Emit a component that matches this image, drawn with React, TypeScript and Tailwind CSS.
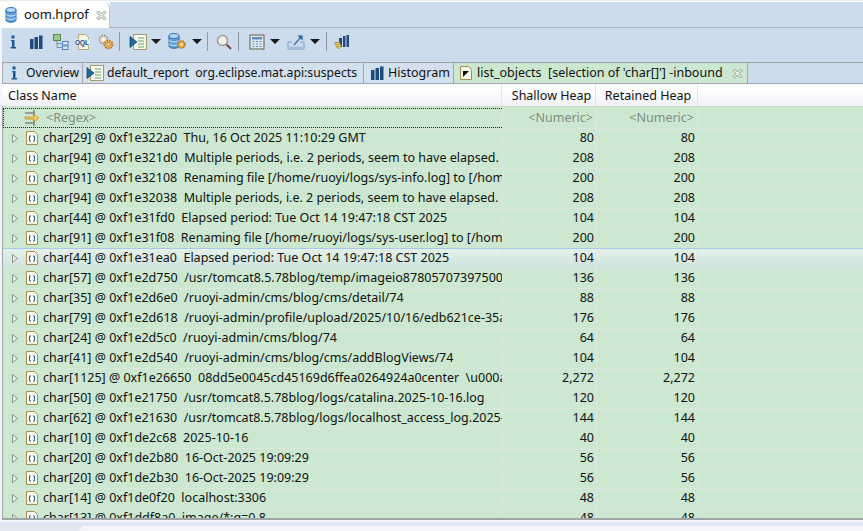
const rows: [string, string][] = [
  ["char[29] @ 0xf1e322a0  Thu, 16 Oct 2025 11:10:29 GMT", "80"],
  ["char[94] @ 0xf1e321d0  Multiple periods, i.e. 2 periods, seem to have elapsed.", "208"],
  ["char[91] @ 0xf1e32108  Renaming file [/home/ruoyi/logs/sys-info.log] to [/home", "200"],
  ["char[94] @ 0xf1e32038  Multiple periods, i.e. 2 periods, seem to have elapsed.", "208"],
  ["char[44] @ 0xf1e31fd0  Elapsed period: Tue Oct 14 19:47:18 CST 2025", "104"],
  ["char[91] @ 0xf1e31f08  Renaming file [/home/ruoyi/logs/sys-user.log] to [/home", "200"],
  ["char[44] @ 0xf1e31ea0  Elapsed period: Tue Oct 14 19:47:18 CST 2025", "104"],
  ["char[57] @ 0xf1e2d750  /usr/tomcat8.5.78blog/temp/imageio8780570739750035", "136"],
  ["char[35] @ 0xf1e2d6e0  /ruoyi-admin/cms/blog/cms/detail/74", "88"],
  ["char[79] @ 0xf1e2d618  /ruoyi-admin/profile/upload/2025/10/16/edb621ce-35a", "176"],
  ["char[24] @ 0xf1e2d5c0  /ruoyi-admin/cms/blog/74", "64"],
  ["char[41] @ 0xf1e2d540  /ruoyi-admin/cms/blog/cms/addBlogViews/74", "104"],
  ["char[1125] @ 0xf1e26650  08dd5e0045cd45169d6ffea0264924a0center  \\u000a", "2,272"],
  ["char[50] @ 0xf1e21750  /usr/tomcat8.5.78blog/logs/catalina.2025-10-16.log", "120"],
  ["char[62] @ 0xf1e21630  /usr/tomcat8.5.78blog/logs/localhost_access_log.2025-", "144"],
  ["char[10] @ 0xf1de2c68  2025-10-16", "40"],
  ["char[20] @ 0xf1de2b80  16-Oct-2025 19:09:29", "56"],
  ["char[20] @ 0xf1de2b30  16-Oct-2025 19:09:29", "56"],
  ["char[14] @ 0xf1de0f20  localhost:3306", "48"],
  ["char[13] @ 0xf1ddf8a0  image/*;q=0.8", "48"],
];

function InfoIcon() {
  return (
    <svg width="16" height="16" viewBox="0 0 16 16">
      <rect x="6.5" y="1.5" width="3" height="3" fill="#1c5a96" />
      <path d="M6 6h3.5v7H11v1.5H5.5V13H7V7.3H6z" fill="#1c5a96" />
    </svg>
  );
}

function HistogramIcon() {
  return (
    <svg width="16" height="16" viewBox="0 0 16 16">
      <rect x="2" y="5" width="3.5" height="10" fill="#1f4a7c" />
      <rect x="6.5" y="3" width="3.5" height="12" fill="#1f4a7c" />
      <rect x="11" y="1.5" width="3.5" height="13.5" fill="#1f4a7c" />
    </svg>
  );
}

function TreeIcon() {
  return (
    <svg width="16" height="16" viewBox="0 0 16 16" fill="none">
      <rect x="0.5" y="0.5" width="7" height="6" fill="#9bc98f" stroke="#4f8a4a" />
      <path d="M4 7v6.5h5M4 9.5h5" stroke="#7a8fa8" />
      <rect x="9.5" y="7.5" width="5.5" height="3.5" fill="#dbe8f5" stroke="#4f86c0" />
      <rect x="9.5" y="12" width="5.5" height="3.5" fill="#dbe8f5" stroke="#4f86c0" />
    </svg>
  );
}

function OqlIcon() {
  return (
    <svg width="16" height="16" viewBox="0 0 16 16" fill="none">
      <path d="M3.5 0.5h7l3 3v12h-10z" fill="#f7f4e4" stroke="#b8a878" />
      <rect x="0" y="5.5" width="15" height="6" fill="#eef0f8" />
      <text x="0" y="11" fontSize="6.5" fontWeight="700" fontFamily="Liberation Sans, sans-serif" fill="#1f3f78">OQL</text>
    </svg>
  );
}

function GearIcon() {
  return (
    <svg width="16" height="16" viewBox="0 0 16 16" fill="none">
      <circle cx="5.5" cy="5.5" r="4" fill="#eadfce" stroke="#a08a78" strokeWidth="1.6" strokeDasharray="1.6 1.1" />
      <circle cx="5.5" cy="5.5" r="1.2" fill="#fff" />
      <circle cx="10.5" cy="10.5" r="4" fill="#e8b860" stroke="#b07a2a" strokeWidth="1.8" strokeDasharray="1.6 1.1" />
      <circle cx="10.5" cy="10.5" r="1.4" fill="#fff6e0" stroke="#a87020" strokeWidth="0.7" />
    </svg>
  );
}

function ReportIcon() {
  return (
    <svg width="18" height="16" viewBox="0 0 18 16" fill="none">
      <rect x="4.5" y="0.5" width="13" height="15" fill="#f5f8ee" stroke="#a99a66" />
      <path d="M9 4h6M9 7h6M9 10h6M9 13h6" stroke="#6aa56a" />
      <path d="M1 2.5L8 8l-7 5.5z" fill="#1b6a9c" stroke="#123f66" strokeWidth="0.7" />
    </svg>
  );
}

function DbIcon({ gear }: { gear?: boolean }) {
  return (
    <svg width="19" height="17" viewBox="0 0 19 17" fill="none">
      <path d="M1 3v10c0 3 10 3 10 0V3z" fill="#5d9fdc" stroke="#2a6cad" />
      <ellipse cx="6" cy="3" rx="5" ry="2.4" fill="#b9d9f4" stroke="#2a6cad" />
      <path d="M1 7c0 2.6 10 2.6 10 0M1 10.5c0 2.6 10 2.6 10 0" stroke="#d3e6f7" />
      {gear && (
        <>
          <circle cx="13.5" cy="11.5" r="3.6" fill="#e8ae44" stroke="#a8701c" strokeWidth="1.5" strokeDasharray="1.5 1" />
          <circle cx="13.5" cy="11.5" r="1.2" fill="#fff5d8" />
        </>
      )}
    </svg>
  );
}

function SearchIcon() {
  return (
    <svg width="16" height="16" viewBox="0 0 16 16" fill="none">
      <circle cx="6.5" cy="6.5" r="5" fill="#f4f4ee" stroke="#a09c8c" strokeWidth="1.5" />
      <path d="M10.5 10.5l4.5 4.5" stroke="#7a4a3a" strokeWidth="2" />
    </svg>
  );
}

function CalcIcon() {
  return (
    <svg width="16" height="16" viewBox="0 0 16 16" fill="none">
      <rect x="1" y="1" width="14" height="14" fill="#dfe8ee" stroke="#5c5c4c" />
      <rect x="3" y="3" width="10" height="2.5" fill="#5e8fb8" />
      <path d="M3.5 7.5h2m1.5 0h2m1.5 0h2M3.5 10h2m1.5 0h2m1.5 0h2M3.5 12.5h2m1.5 0h2m1.5 0h2" stroke="#6a95bb" />
    </svg>
  );
}

function ExportIcon() {
  return (
    <svg width="18" height="16" viewBox="0 0 18 16" fill="none">
      <path d="M1 8v7h16V8h-4M1 8h4" stroke="#7c9cc4" strokeWidth="1" fill="none" />
      <path d="M2 13.5h14" stroke="#a8bfdc" strokeWidth="2" />
      <path d="M7 11L14 3" stroke="#3f78ae" strokeWidth="1.5" />
      <path d="M10.5 1.5h5v5z" fill="#1f5f9c" />
    </svg>
  );
}

function RefreshBarsIcon() {
  return (
    <svg width="16" height="16" viewBox="0 0 16 16" fill="none">
      <rect x="5" y="4" width="3" height="9" fill="#1f4a7c" />
      <rect x="9" y="2" width="2.5" height="11" fill="#1f4a7c" />
      <rect x="12.5" y="1" width="2.5" height="12" fill="#1f4a7c" />
      <path d="M1 8.5h5v2.5h2L4.5 15 2 12.5h2V10.5H1z" fill="#f2c84a" stroke="#a87a1c" strokeWidth="0.7" />
    </svg>
  );
}

function ArrayIcon() {
  return (
    <svg width="12" height="14" viewBox="0 0 12 14" fill="none">
      <path d="M0.5 0.5h8l3 3v10h-11z" fill="#fbf8ee" stroke="#a88d4e" />
      <path d="M5 5H3.5v5H5M7 5h1.5v5H7" stroke="#2b62a8" />
    </svg>
  );
}

function ListObjectsIcon() {
  return (
    <svg width="12" height="14" viewBox="0 0 12 14" fill="none">
      <path d="M0.5 0.5h8l3 3v10h-11z" fill="#fbf8ee" stroke="#a88d4e" />
      <path d="M3 5h6L3 11z" fill="#101010" />
    </svg>
  );
}

function Expander() {
  return (
    <svg width="6" height="9" viewBox="0 0 6 9" fill="none" className="shrink-0">
      <path d="M0.5 0.5L5.5 4.5L0.5 8.5z" fill="#e4efe4" stroke="#8f958f" />
    </svg>
  );
}

function Caret() {
  return <div className="w-0 h-0 border-x-[5px] border-x-transparent border-t-[5px] border-t-[#1a1a1a]" />;
}

function Sep() {
  return <div className="w-px h-[19px] bg-[#8f9aa6]" />;
}

function CloseX() {
  return (
    <svg width="11" height="11" viewBox="0 0 11 11" fill="none">
      <path d="M1 2.5L2.5 1 5.5 4 8.5 1 10 2.5 7 5.5 10 8.5 8.5 10 5.5 7 2.5 10 1 8.5 4 5.5 1 2.5z" fill="#eef4ea" stroke="#8a9a8a" />
    </svg>
  );
}

export default function App() {
  return (
    <div className="w-[863px] h-[531px] overflow-hidden flex flex-col bg-[#f4f5fb] text-[12.5px] text-[#111] font-['Noto_Sans',sans-serif]">
      {/* Editor tab strip */}
      <div className="h-[28px] shrink-0 flex bg-white border-t border-[#e6ebf3]">
        <div className="w-[110px] h-[27px] pl-[5px] pt-[1px] flex bg-white">
          <div className="w-[105px] bg-white rounded-t-[6px] border-r border-[#b9c3cf] flex items-center">
            <DbIcon />
            <span className="text-[13px] pb-[1px]">oom.hprof</span>
            <span className="ml-[7px]"><CloseX /></span>
          </div>
        </div>
        <div className="flex-1 bg-[#cddcec] mt-[1px] border-b border-[#a9b4c2]" />
      </div>

      {/* Toolbar */}
      <div className="ml-[2px] h-[34px] shrink-0 flex items-center bg-[#cddcec] pl-[3px] pb-[7px]">
        <InfoIcon />
        <span className="ml-[7px]"><HistogramIcon /></span>
        <span className="ml-[9px]"><TreeIcon /></span>
        <span className="ml-[6px]"><OqlIcon /></span>
        <span className="ml-[7px]"><GearIcon /></span>
        <span className="ml-[5px]"><Sep /></span>
        <span className="ml-[9px]"><ReportIcon /></span>
        <span className="ml-[4px]"><Caret /></span>
        <span className="ml-[7px]"><DbIcon gear /></span>
        <span className="ml-[5px]"><Caret /></span>
        <span className="ml-[5px]"><Sep /></span>
        <span className="ml-[8px]"><SearchIcon /></span>
        <span className="ml-[6px]"><Sep /></span>
        <span className="ml-[10px]"><CalcIcon /></span>
        <span className="ml-[5px]"><Caret /></span>
        <span className="ml-[7px]"><ExportIcon /></span>
        <span className="ml-[5px]"><Caret /></span>
        <span className="ml-[6px]"><Sep /></span>
        <span className="ml-[7px]"><RefreshBarsIcon /></span>
      </div>

      {/* Result tabs */}
      <div className="ml-[2px] h-[22px] shrink-0 flex bg-[#cddcec] border-y border-[#a0a4a8]">
        <div className="w-[81px] flex items-center gap-[4px] pl-[3px] bg-[#d3e0ee] border-x border-[#a9a9a9]">
          <InfoIcon />
          <span className="text-[12.2px]">Overview</span>
        </div>
        <div className="w-[281px] flex items-center gap-[3px] pl-[3px] bg-[#d3e0ee] border-r border-[#a9a9a9]">
          <ReportIcon />
          <span className="text-[12.2px] whitespace-pre">default_report  org.eclipse.mat.api:suspects</span>
        </div>
        <div className="w-[90px] flex items-center gap-[3px] pl-[5px] bg-[#d3e0ee] border-r border-[#a9a9a9]">
          <HistogramIcon />
          <span>Histogram</span>
        </div>
        <div className="w-[294px] flex items-center gap-[5px] pl-[6px] bg-[#cde8d0] border-r border-[#a9a9a9]">
          <ListObjectsIcon />
          <span className="whitespace-pre">list_objects  [selection of 'char[]'] -inbound</span>
          <span className="ml-[4px]"><CloseX /></span>
        </div>
      </div>

      {/* Table header */}
      <div className="ml-[2px] h-[23px] shrink-0 flex bg-gradient-to-b from-white from-30% to-[#f0f1f5] border-b border-[#d4d4d4]">
        <div className="w-[500px] pl-[6px] pt-[2px] flex items-center border-r border-[#e4e4e4]">Class Name</div>
        <div className="w-[94px] pl-[6px] pt-[2px] flex items-center justify-center border-r border-[#e4e4e4]">Shallow Heap</div>
        <div className="w-[102px] pl-[3px] pt-[2px] flex items-center justify-center border-r border-[#e4e4e4]">Retained Heap</div>
      </div>

      {/* Table body */}
      <div className="ml-[2px] h-[413px] shrink-0 overflow-hidden bg-[#cde8d0] border-l border-b-2 border-[#a0a4a8]">
        {/* Filter row */}
        <div className="h-[21px] flex items-center">
          <div className="w-[499px] h-[20px] flex items-center border-y border-l border-dotted border-[#222] pl-[17px] gap-[5px]">
            <svg width="20" height="16" viewBox="0 0 20 16" fill="none">
              <path d="M4 3h9M13 0v6M4 13h9M13 10v6" stroke="#5a5a5a" />
              <path d="M4 7h9V4.5L18 8l-5 3.5V9H4z" fill="#f4d068" stroke="#b08a28" strokeWidth="0.7" />
            </svg>
            <span className="pt-[1px] text-[#7d8f82]">&lt;Regex&gt;</span>
          </div>
          <div className="w-[94px] h-[21px] flex items-center justify-end pr-[3px] pt-[1px] border-l border-[#dde6dd] text-[#7d8f82]">&lt;Numeric&gt;</div>
          <div className="w-[102px] h-[21px] flex items-center justify-end pr-[3px] pt-[1px] border-x border-[#dde6dd] text-[#7d8f82]">&lt;Numeric&gt;</div>
        </div>

        {rows.map(([label, size], i) => (
          <div
            key={i}
            className={
              i === 6
                ? "h-[20px] flex items-center border-t border-[#a9c8ee] bg-gradient-to-b from-[#e4f1e8] to-[#cfe3de]"
                : "h-[20px] flex items-center border-t border-[#dde6dd]"
            }
          >
            <div className="w-[499px] h-full flex items-center overflow-hidden">
              <span className="ml-[9px]"><Expander /></span>
              <span className="ml-[8px] shrink-0 pb-[2px]"><ArrayIcon /></span>
              <span className="ml-[5px] pb-[1px] whitespace-pre">{label}</span>
            </div>
            <div className="w-[94px] h-full flex items-center justify-end pr-[2px] pb-[1px] border-l border-[#dde6dd]">{size}</div>
            <div className="w-[102px] h-full flex items-center justify-end pr-[2px] pb-[1px] border-x border-[#dde6dd]">{size}</div>
          </div>
        ))}
      </div>

      {/* Bottom strip */}
      <div className="mt-[2px] h-[4px] shrink-0 bg-[#dfe6f6]" />
      <div className="flex-1 flex">
        <div className="w-[82px] bg-[#e2e7f2] rounded-br-[6px]" />
      </div>
    </div>
  );
}
